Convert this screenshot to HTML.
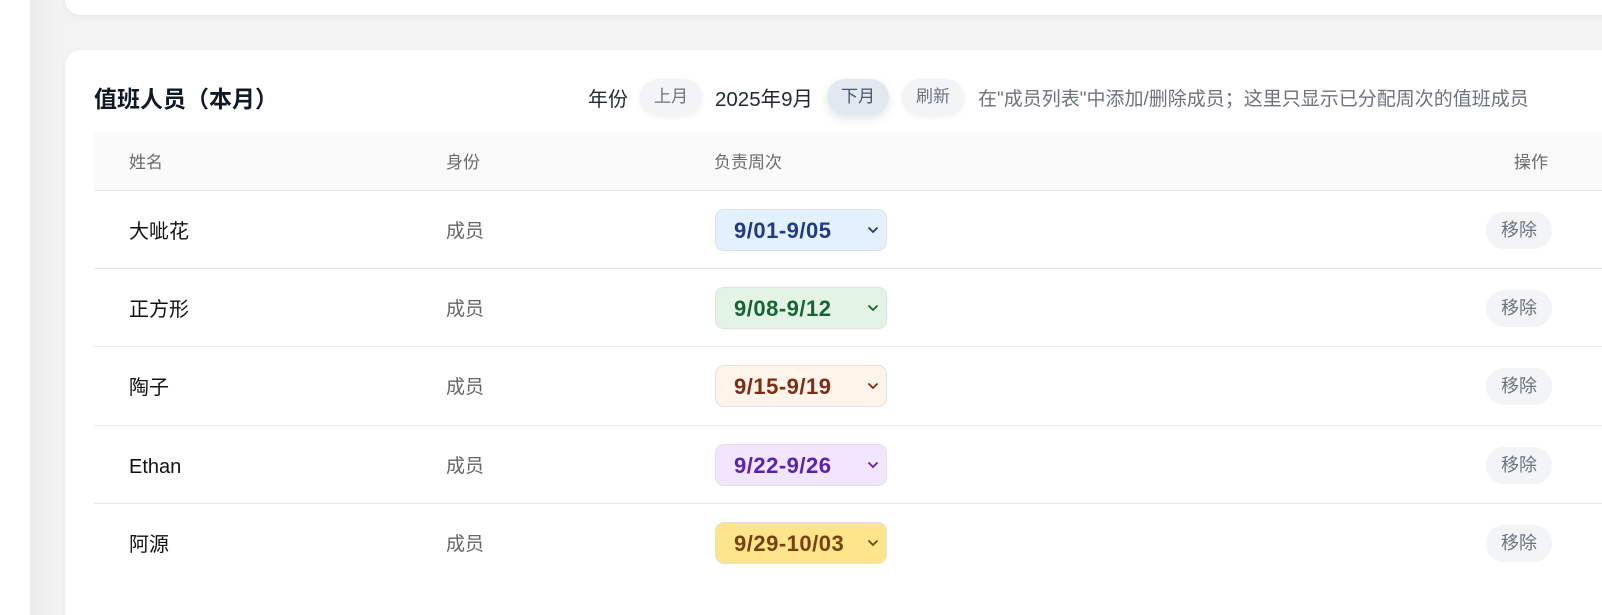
<!DOCTYPE html>
<html style="overflow:hidden"><head><meta charset="utf-8"><style>
*{box-sizing:border-box;margin:0;padding:0}
html,body{width:1602px;height:615px;overflow:hidden}
body{background:#fff;font-family:"Liberation Sans","Noto Sans CJK SC",sans-serif;position:relative}
.bg{position:absolute;left:30px;top:0;width:1572px;height:615px;background:linear-gradient(90deg,#ececec,#f3f3f3 30px,#f3f3f3)}
.card1{position:absolute;left:65px;top:-30px;width:1600px;height:45px;background:#fff;border-radius:16px;box-shadow:0 2px 8px rgba(0,0,0,.05)}
.card2{position:absolute;left:65px;top:50px;width:1600px;height:565px;background:#fff;border-radius:16px 0 0 0;box-shadow:0 2px 8px rgba(0,0,0,.04)}
.title{position:absolute;left:94px;top:83px;font-size:23px;line-height:32px;font-weight:bold;color:#111827}
.tools{position:absolute;left:588px;top:79px;height:36px;display:flex;align-items:center;white-space:nowrap;font-size:20px;color:#1f2937}
.btn{display:inline-block;height:36px;line-height:36px;padding:0 14px;border-radius:18px;background:#f3f4f6;color:#6b7280;font-size:17px;box-shadow:0 2px 6px rgba(0,0,0,.06)}
.btn.on{background:#e2e8f0;color:#475569;box-shadow:0 4px 10px rgba(0,0,0,.1)}
.hint{color:#6b7280;font-size:19px}
.thead{position:absolute;left:94px;top:132px;width:1508px;height:59px;background:#fafafa;border-bottom:1px solid #e5e7eb}
.th{position:absolute;top:1px;line-height:59px;font-size:17px;color:#6b6b6b}
.row{position:absolute;left:94px;width:1508px;height:78px;border-bottom:1px solid #e5e7eb}
.name{position:absolute;left:35px;top:2px;line-height:78px;font-size:20px;color:#111}
.role{position:absolute;left:352px;top:2px;line-height:78px;font-size:19px;color:#666}
.sel{position:absolute;left:621px;top:18px;width:172px;height:42px;border-radius:9px;border:1px solid #dde1e6;font-size:22px;font-weight:bold;line-height:41px;padding-left:18px;letter-spacing:.5px}
.sel svg{position:absolute;right:7px;top:15px}
.rm{position:absolute;left:1392px;top:21px;width:66px;height:37px;border-radius:18px;background:#f3f4f6;color:#6b7280;font-size:18px;line-height:37px;text-align:center}
</style></head><body>
<div class="bg"></div>
<div class="card1"></div>
<div class="card2"></div>
<div class="title">值班人员（本月）</div>
<div class="tools">年份<span style="width:12px"></span><span class="btn">上月</span><span style="width:13px"></span><span style="font-size:20.5px">2025年9月</span><span style="width:14px"></span><span class="btn on">下月</span><span style="width:13px"></span><span class="btn">刷新</span><span style="width:14px"></span><span class="hint">在"成员列表"中添加/删除成员；这里只显示已分配周次的值班成员</span></div>
<div class="thead"><span class="th" style="left:35px">姓名</span><span class="th" style="left:352px">身份</span><span class="th" style="left:620px">负责周次</span><span class="th" style="left:1420px">操作</span></div>

<div class="row" style="top:191px"><span class="name">大呲花</span><span class="role">成员</span><div class="sel" style="background:#e3f0fd;color:#1e3a8a">9/01-9/05<svg width="12" height="10" viewBox="0 0 12 10"><path d="M1.5 2.5l4.5 4.5 4.5-4.5" fill="none" stroke="#1e3a8a" stroke-width="1.8"/></svg></div><span class="rm">移除</span></div>
<div class="row" style="top:269px"><span class="name">正方形</span><span class="role">成员</span><div class="sel" style="background:#e3f4e6;color:#166534">9/08-9/12<svg width="12" height="10" viewBox="0 0 12 10"><path d="M1.5 2.5l4.5 4.5 4.5-4.5" fill="none" stroke="#166534" stroke-width="1.8"/></svg></div><span class="rm">移除</span></div>
<div class="row" style="top:347px;height:79px"><span class="name">陶子</span><span class="role">成员</span><div class="sel" style="background:#fef4ea;color:#7c2d12">9/15-9/19<svg width="12" height="10" viewBox="0 0 12 10"><path d="M1.5 2.5l4.5 4.5 4.5-4.5" fill="none" stroke="#7c2d12" stroke-width="1.8"/></svg></div><span class="rm">移除</span></div>
<div class="row" style="top:426px"><span class="name">Ethan</span><span class="role">成员</span><div class="sel" style="background:#f1e6fd;color:#5b21b6">9/22-9/26<svg width="12" height="10" viewBox="0 0 12 10"><path d="M1.5 2.5l4.5 4.5 4.5-4.5" fill="none" stroke="#5b21b6" stroke-width="1.8"/></svg></div><span class="rm">移除</span></div>
<div class="row" style="top:504px;border-bottom:none"><span class="name">阿源</span><span class="role">成员</span><div class="sel" style="background:#fde68a;color:#78400e">9/29-10/03<svg width="12" height="10" viewBox="0 0 12 10"><path d="M1.5 2.5l4.5 4.5 4.5-4.5" fill="none" stroke="#78400e" stroke-width="1.8"/></svg></div><span class="rm">移除</span></div>
</body></html>
